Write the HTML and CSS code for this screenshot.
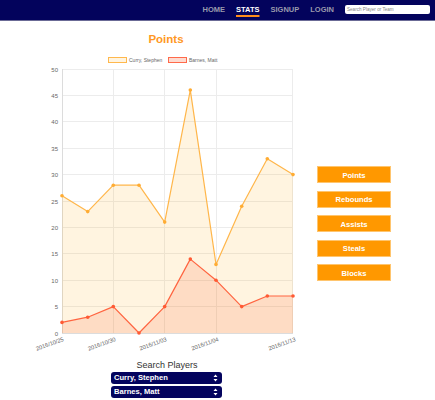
FILE: index.html
```html
<!DOCTYPE html>
<html>
<head>
<meta charset="utf-8">
<link rel="stylesheet" href="styles.css">
</head>
<body>
<header class="nav">
  <a class="nav-link">HOME</a>
  <a class="nav-link active">STATS</a>
  <a class="nav-link">SIGNUP</a>
  <a class="nav-link">LOGIN</a>
  <div class="search-box">Search Player or Team</div>
</header>
<main class="main">
  <section class="chart-col">
    <h1 class="chart-title">Points</h1>
    <svg class="chart" width="296" height="306" viewBox="18 50 296 306">
      <!-- legend -->
      <rect x="108.5" y="57.5" width="18" height="5" fill="#fff4e0" stroke="#ffb84d" stroke-width="1"/>
      <text class="legend" x="129" y="62.3">Curry, Stephen</text>
      <rect x="168.5" y="57.5" width="18" height="5" fill="#fddbd0" stroke="#ff6a4a" stroke-width="1"/>
      <text class="legend" x="189" y="62.3">Barnes, Matt</text>

      <!-- grid -->
      <g class="grid">
        <line x1="62" x2="293" y1="69.5" y2="69.5"/>
        <line x1="62" x2="293" y1="95.5" y2="95.5"/>
        <line x1="62" x2="293" y1="121.5" y2="121.5"/>
        <line x1="62" x2="293" y1="148.5" y2="148.5"/>
        <line x1="62" x2="293" y1="174.5" y2="174.5"/>
        <line x1="62" x2="293" y1="201.5" y2="201.5"/>
        <line x1="62" x2="293" y1="227.5" y2="227.5"/>
        <line x1="62" x2="293" y1="253.5" y2="253.5"/>
        <line x1="62" x2="293" y1="280.5" y2="280.5"/>
        <line x1="62" x2="293" y1="306.5" y2="306.5"/>
        <line x1="113.5" x2="113.5" y1="69" y2="333"/>
        <line x1="164.5" x2="164.5" y1="69" y2="333"/>
        <line x1="216.5" x2="216.5" y1="69" y2="333"/>
        <line x1="292.5" x2="292.5" y1="69" y2="333"/>
      </g>
      <g class="axis">
        <line x1="62.5" x2="62.5" y1="69" y2="333"/>
        <line x1="62" x2="293" y1="333.5" y2="333.5"/>
      </g>

      <!-- y labels -->
      <g class="ytick">
        <text x="58" y="71.5">50</text>
        <text x="58" y="97.9">45</text>
        <text x="58" y="124.3">40</text>
        <text x="58" y="150.7">35</text>
        <text x="58" y="177.1">30</text>
        <text x="58" y="203.5">25</text>
        <text x="58" y="229.9">20</text>
        <text x="58" y="256.3">15</text>
        <text x="58" y="282.7">10</text>
        <text x="58" y="309.1">5</text>
        <text x="58" y="335.5">0</text>
      </g>

      <!-- x labels -->
      <g class="xtick">
        <text x="63" y="341" transform="rotate(-20 63 338)">2016/10/25</text>
        <text x="115" y="341" transform="rotate(-20 115 338)">2016/10/30</text>
        <text x="166" y="341" transform="rotate(-20 166 338)">2016/11/03</text>
        <text x="218" y="341" transform="rotate(-20 218 338)">2016/11/04</text>
        <text x="295" y="341" transform="rotate(-20 295 338)">2016/11/13</text>
      </g>

      <!-- Curry -->
      <path class="fill-curry" d="M62,333 L62,195.7 L87.7,211.6 L113.3,185.2 L139,185.2 L164.7,222.1 L190.3,90.1 L216,264.4 L241.7,206.3 L267.3,158.8 L293,174.6 L293,333 Z"/>
      <polyline class="line-curry" points="62,195.7 87.7,211.6 113.3,185.2 139,185.2 164.7,222.1 190.3,90.1 216,264.4 241.7,206.3 267.3,158.8 293,174.6"/>

      <!-- Barnes -->
      <path class="fill-barnes" d="M62,333 L62,322.4 L87.7,317.2 L113.3,306.6 L139,333 L164.7,306.6 L190.3,259.1 L216,280.2 L241.7,306.6 L267.3,296 L293,296 L293,333 Z"/>
      <polyline class="line-barnes" points="62,322.4 87.7,317.2 113.3,306.6 139,333 164.7,306.6 190.3,259.1 216,280.2 241.7,306.6 267.3,296 293,296"/>

      <g class="pt-curry">
        <circle cx="62" cy="195.7" r="1.8"/><circle cx="87.7" cy="211.6" r="1.8"/>
        <circle cx="113.3" cy="185.2" r="1.8"/><circle cx="139" cy="185.2" r="1.8"/>
        <circle cx="164.7" cy="222.1" r="1.8"/><circle cx="190.3" cy="90.1" r="1.8"/>
        <circle cx="216" cy="264.4" r="1.8"/><circle cx="241.7" cy="206.3" r="1.8"/>
        <circle cx="267.3" cy="158.8" r="1.8"/><circle cx="293" cy="174.6" r="1.8"/>
      </g>
      <g class="pt-barnes">
        <circle cx="62" cy="322.4" r="1.8"/><circle cx="87.7" cy="317.2" r="1.8"/>
        <circle cx="113.3" cy="306.6" r="1.8"/><circle cx="139" cy="333" r="1.8"/>
        <circle cx="164.7" cy="306.6" r="1.8"/><circle cx="190.3" cy="259.1" r="1.8"/>
        <circle cx="216" cy="280.2" r="1.8"/><circle cx="241.7" cy="306.6" r="1.8"/>
        <circle cx="267.3" cy="296" r="1.8"/><circle cx="293" cy="296" r="1.8"/>
      </g>
    </svg>
    <div class="search">
      <div class="search-label">Search Players</div>
      <div class="select"><span>Curry, Stephen</span>
        <svg class="arrows" width="5" height="8" viewBox="0 0 5 8"><path d="M2.5,0.5 L4.5,3 L0.5,3 Z M2.5,7.5 L4.5,5 L0.5,5 Z" fill="#fff"/></svg>
      </div>
      <div class="select"><span>Barnes, Matt</span>
        <svg class="arrows" width="5" height="8" viewBox="0 0 5 8"><path d="M2.5,0.5 L4.5,3 L0.5,3 Z M2.5,7.5 L4.5,5 L0.5,5 Z" fill="#fff"/></svg>
      </div>
    </div>
  </section>
  <aside class="stat-buttons">
    <button class="stat-btn">Points</button>
    <button class="stat-btn">Rebounds</button>
    <button class="stat-btn">Assists</button>
    <button class="stat-btn">Steals</button>
    <button class="stat-btn">Blocks</button>
  </aside>
</main>
</body>
</html>
```

FILE: styles.css
```css
* { box-sizing: border-box; }
html, body { margin: 0; padding: 0; background: #fff; }
body { font-family: "Liberation Sans", Arial, sans-serif; width: 435px; height: 400px; overflow: hidden; }

.nav {
  height: 21px;
  background: #03035c;
  border-bottom: 1px solid #6b6b96;
  display: flex;
  justify-content: flex-end;
  align-items: center;
  gap: 11px;
  padding: 0 5px 1px 0;
}
.nav-link {
  font-size: 7.5px;
  font-weight: bold;
  color: #9a9aac;
  line-height: 8px;
}
.nav-link.active {
  color: #fff;
  text-decoration: underline;
  text-decoration-color: #ff8c1a;
  text-decoration-thickness: 1.5px;
  text-underline-offset: 3px;
}
.search-box {
  width: 85px;
  height: 9px;
  background: #fff;
  border-radius: 2px;
  font-size: 4.6px;
  line-height: 9px;
  color: #888;
  padding-left: 2px;
}

.main { display: flex; }
.chart-col {
  width: 296px;
  margin-left: 18px;
  display: flex;
  flex-direction: column;
  align-items: center;
}
.chart-title {
  margin: 11px 0 4px;
  font-size: 11.5px;
  line-height: 14px;
  font-weight: bold;
  color: #ff9824;
}
.chart { display: block; }
.legend { font-size: 5px; fill: #666; font-family: "Liberation Sans", Arial, sans-serif; }
.grid line { stroke: #ececec; stroke-width: 1; }
.axis line { stroke: #dcdcdc; stroke-width: 1; }
.ytick text { font-size: 6px; fill: #666; text-anchor: end; font-family: "Liberation Sans", Arial, sans-serif; }
.xtick text { font-size: 5.8px; fill: #666; text-anchor: end; font-family: "Liberation Sans", Arial, sans-serif; }
.fill-curry { fill: rgba(255, 165, 0, 0.12); }
.line-curry { fill: none; stroke: #ffb64a; stroke-width: 1.2; stroke-linejoin: round; }
.fill-barnes { fill: rgba(250, 100, 50, 0.16); }
.line-barnes { fill: none; stroke: #ff6440; stroke-width: 1.2; stroke-linejoin: round; }
.pt-curry circle { fill: #ffac33; }
.pt-barnes circle { fill: #ff5a33; }

.search {
  margin-top: 4px;
  display: flex;
  flex-direction: column;
  align-items: center;
  gap: 2px;
}
.search-label {
  font-size: 9px;
  line-height: 11px;
  color: #333;
  margin-bottom: -1px;
  margin-left: 2px;
}
.select {
  width: 111px;
  height: 12px;
  background: #04045e;
  border-radius: 3px;
  color: #fff;
  font-size: 7.6px;
  font-weight: bold;
  display: flex;
  align-items: center;
  padding: 0 4px 0 3px;
  margin-left: 1px;
}
.select span { flex: 1; line-height: 12px; }
.arrows { display: block; }

.stat-buttons {
  display: flex;
  flex-direction: column;
  gap: 7.5px;
  padding-top: 145px;
  margin-left: 3px;
}
.stat-btn {
  width: 74px;
  height: 17px;
  margin: 0;
  padding: 2px 0 0;
  background: #ff9800;
  border: 1px solid #ffc56e;
  color: #fff;
  font-family: "Liberation Sans", Arial, sans-serif;
  font-size: 7.6px;
  font-weight: bold;
  line-height: 12px;
}
```
